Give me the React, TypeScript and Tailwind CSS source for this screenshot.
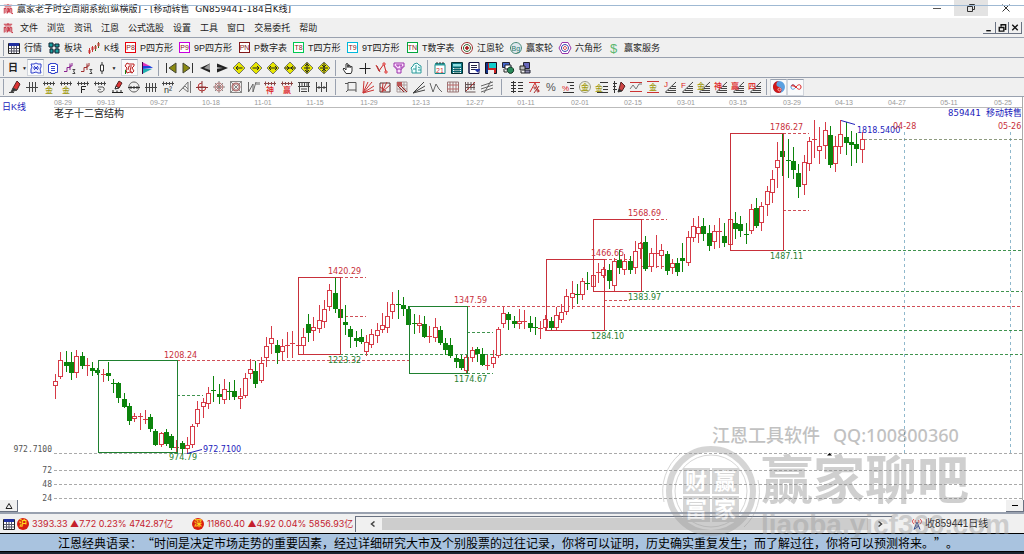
import React from 'react';

type Stroke = [d: string, stroke?: string, fill?: string];
type Glyph = [text: string, x: number, y: number, color: string, size: number];
type IconDef = { name: string; p?: Stroke[]; t?: Glyph[]; on?: boolean };

const K = '#444';
const R = '#d22';
const G = '#108010';
const Y = '#e6e600';
const OLIVE = '#a09a10';

const COMB = 'M0 2.5H12M1.5 .5V4.5M4.5 1V4M7.5 1V4M10.5 .5V4.5';
const DIAMOND = 'M6 0L12 6L6 12L0 6Z';
const STEPS = 'M5 2.5H12M6 5.5H12M4 8.5H12M1 11.5H12';
const SLOPE = 'M1 11.5L12 1M2 11.5H12M4 9.5H12M6 7.5H12M8 5.5H12';

const Icon: React.FC<{ def: IconDef; className?: string }> = ({ def, className = 'w-3 h-3' }) => (
  <svg viewBox="0 0 12 12" className={`${className} shrink-0 overflow-visible`} aria-hidden="true">
    {def.p?.map(([d, stroke = K, fill = 'none'], i) => (
      <path key={i} d={d} stroke={stroke} fill={fill} strokeWidth="1" />
    ))}
    {def.t?.map(([text, x, y, color, size], i) => (
      <text key={i} x={x} y={y} fill={color} fontSize={size} fontWeight="500">{text}</text>
    ))}
  </svg>
);

const sheet: IconDef = {
  name: '行情',
  p: [
    ['M.5 1.5H11.5V11.5H.5Z', '#222', '#fff'],
    ['M1 1H11V4H1Z', 'none', '#2030a0'],
    ['M1 6.5H11M1 9H11M3.5 4V11M6 4V11M8.5 4V11', '#556'],
  ],
};

const logo: IconDef = {
  name: '赢家',
  p: [
    ['M1 1.5H11M6 0V2M2 3.5H10M1.5 5V11.5M3.5 5V11M1.5 5.5H3.5M5 5.5H7.5V9.5H5ZM6.5 6V9M5 11.5L6 9M8.5 11V5.5H10.5V11.5H12', '#c11525'],
  ],
};

const viewIcons: IconDef[] = [
  { name: '周期图', on: true, p: [['M1 2H4L6 1L8 2H11V5L10 7L11 11H8L6 10L3 11H1V7L2 5Z', '#3344cc', '#eef'], ['M4 4L8 8M8 4L4 8M3 6H9', '#3344cc']] },
  { name: '资料', p: [['M3 1.5H9V2.5H10.5V10.5H8V11.5H4V10.5H1.5V2.5H3Z', '#3344cc', '#fff'], ['M4 4.5H8M4 6.5H8M4 8.5H8', '#3344cc']] },
  { name: '分段一', p: [['M0 9.5H3V5.5H6V1.5M6 8V4H8V1', '#8a2090'], ['M8.5 7.5H11L9.5 9L11 11.5H8.5', K]] },
  { name: '分段二', p: [['M0 9.5H3V5.5H6V1.5M6 8V4H8V1', '#a03030'], ['M8.5 7.5H11L9.5 9L11 11.5H8.5', K]] },
];

const formIcons: IconDef[] = [
  { name: '形态', on: true, p: [['M3 1L5 2H10V4L8 6L10 9L8 11L6 10L3 11L2 8L3 6L1 4Z', '#b22', '#fee'], ['M5 4H8M5 4L4 8M7 5L6 9L9 11', '#b22'], ['M1.5 8V12', G]] },
  { name: '旗形', p: [['M1 0L9 4H1Z', 'none', '#e030c0'], ['M1 4H9L12 6L1 7Z', 'none', '#2244dd'], ['M1 7H11L1 12Z', 'none', '#20b0b0'], ['M1.5 0V12', '#404']] },
];

const moveIcons: IconDef[] = [
  { name: '首页', p: [['M1.5 1V11', '#333'], ['M11 1V11L4 6Z', '#443', '#8a8a10']] },
  { name: '末页', p: [['M10.5 1V11', '#333'], ['M1 1V11L8 6Z', '#443', '#8a8a10']] },
  { name: '左移', p: [['M11 1.5V10.5L1 6Z', 'none', '#222'], ['M11 1.5V8L5 6Z', 'none', '#999']] },
  { name: '右移', p: [['M1 1.5V10.5L12 6Z', 'none', '#222'], ['M1 1.5V5L7 6L1 7Z', 'none', '#aaa']] },
  { name: '向左', p: [[DIAMOND, '#776', Y], ['M3 6H9.5M5 4L3 6L5 8', '#222']] },
  { name: '向右', p: [[DIAMOND, '#776', Y], ['M2.5 6H9M7 4L9 6L7 8', '#222']] },
  { name: '横向拉伸', p: [[DIAMOND, '#776', Y], ['M2 6H10M4 4L2 6L4 8M8 4L10 6L8 8', '#222']] },
  { name: '横向压缩', p: [[DIAMOND, '#776', Y], ['M1 6H11M3 4L5 6L3 8M9 4L7 6L9 8', '#222']] },
  { name: '纵向拉伸', p: [[DIAMOND, '#776', Y], ['M6 1V11M3 6H9M4 4L6 2L8 4M4 8L6 10L8 8', '#222']] },
  { name: '纵向压缩', p: [[DIAMOND, '#776', Y], ['M6 1V11M2 6H10M4 3L6 5L8 3M4 9L6 7L8 9', '#222']] },
];

const pointerIcons: IconDef[] = [
  { name: '手形', p: [['M4 11.5L1 7L2 6L4 8V2L5 1.5L6 2V5V3L8 3.5V5L10 4.5V9L9 11.5Z', '#333', '#fff'], ['M6 3V6M8 4V6', '#333']] },
  { name: '十字', p: [['M0.5 6.5H11.5M6.5 1V12', '#222']] },
  { name: '波段', p: [['M0 3L3 9L5 6L8 2L10 10', '#c22'], ['M1 4L4 10', '#a33'], ['M7 1H9V3H7ZM9 9H11V11H9Z', '#d44', '#fcc']] },
  { name: '宫位', p: [['M1 1H11V5H9V7H3V5H1ZM4 7V11H8V7M3 3H9M5 3V5M8 3V6', '#93a', '#fdf']] },
  { name: '云图', p: [['M2 11V8L1 6L3 4L4 2L7 1L9 3L11 4V11ZM3 7H6M6 3V11M8 5L10 6M8 8H11', '#2a9a9a', '#eff']] },
];

const toolIcons: IconDef[] = [
  { name: '日历', p: [['M1 2.5H11V11.5H1Z', '#188', '#fff'], ['M1 1H11V3.5H1Z', 'none', '#2a9a9a'], ['M3 0V2M6 0V2M9 0V2', '#333']], t: [['21', 2, 10.5, '#c33', 7]] },
  { name: '计算器', p: [['M.5 .5H11.5V11.5H.5Z', '#033', '#0a7080'], ['M2 2H10V4.5H2Z', 'none', '#8fe0e0'], ['M2 6.5H10M2 8.5H10M2 10.5H10', '#fff'], ['M4 5V11M6 5V11M8 5V11', '#055']] },
  { name: '列表', p: [['M1 .5H11V11.5H1Z', '#114', '#fff'], ['M1 1V11', '#114'], ['M3 3.5H9M3 5.5H9M3 7.5H7', '#224'], ['M7 7H12V8L9.5 10.5L7 8Z', 'none', '#2233aa']] },
  { name: '保存', p: [['M.5 .5H11.5V11.5H.5Z', '#112', '#c22'], ['M4 1H11V6H4Z', 'none', '#1cc'], ['M3 8H9V12H3Z', 'none', '#eee'], ['M1 1H3V11H1Z', 'none', '#113388']] },
  { name: '联网', p: [['M.5 .5H7.5V5.5H.5Z', '#223', '#46c'], ['M3 3H9V7H3Z', '#223', '#fff'], ['M8.5 5A3.2 3.2 0 1 1 8.4 5Z', '#132', '#2a8a5a'], ['M2 7V10H5', '#222']] },
  { name: '远程', p: [['M4.5 .5H10.5V6.5H4.5Z', '#223', '#66b'], ['M1 4H6V8H1Z', '#222', '#bbb'], ['M6 8H11V11H6Z', '#223', '#88a'], ['M2 9V11H6', '#222']] },
];

const drawIcons: IconDef[] = [
  { name: '画笔', p: [['M4 7L8 0L11 3L8 9L4 9Z', '#522', '#d33'], ['M4 7L2 11L8 9Z', K, '#333'], ['M0 11.5H5', K]] },
  { name: '等分线', p: [['M0 6.5H12M3.5 1V11M6.5 1V11M9.5 1V11']] },
  { name: '黄金周期', p: [[COMB]], t: [['金', 2, 12, OLIVE, 8]] },
  { name: '黄金时间', p: [[COMB]], t: [['金', 2, 12, OLIVE, 8]] },
  { name: '斐波那契', p: [[COMB], ['M4.5 12V5.5H9M4.5 8.5H8', '#222']] },
  { name: '螺旋', p: [[COMB], ['M4 6H9C12 8 9 12 5 11C2 9 6 7 7 9', '#555']] },
  { name: '标记', p: [['M5 5L8 0L11 2L8 7Z', '#522', '#d33'], ['M5 5L4 8L8 7M1 11.5H12M2 9V12M6 9.5V12M10 9V12', '#222']] },
  { name: '圆周', p: [['M6 1A5 5 0 1 1 5.9 1Z', '#555'], ['M0 6.5H12M3 5V8M6 5V8M9 5V8', '#333']] },
  { name: '刻度', p: [['M0 6.5H12M1.5 2V11M4.5 2V11M7.5 2V11M10.5 2V11']] },
  { name: '平方', p: [[COMB]], t: [['n²', 2, 12, '#333', 9]] },
  { name: '角度扇', p: [['M0 11L9 1V11L4 7M0 11L6 5L9 8M11.5 0V12', '#777']] },
  { name: '圆十字', p: [['M6 2A4 4 0 1 0 10 6H2', '#b33'], ['M6 0V12M0 6.5H12', '#833']] },
  { name: '放射', p: [['M6 0V12M0 6H12M2 2L10 10M10 2L2 10', '#888'], ['M6 2A4 4 0 1 1 5.9 2ZM6 4A2 2 0 1 1 5.9 4Z', '#b77']] },
  { name: '方圆', p: [['M.5 .5H11.5V11.5H.5ZM0 0L12 12M12 0L0 12', '#888'], ['M3 3H9V9H3ZM6 2A4 4 0 1 1 5.9 2Z', '#a66']] },
  { name: '波动', p: [['M1.5 1V11L6 3V11L9 1M10 1V4M12 1V4', '#666']] },
  { name: '神周期', p: [[COMB, '#844']], t: [['神', 2, 12, R, 8]] },
  { name: '赢周期', p: [[COMB, '#844']], t: [['赢', 2, 12, R, 8]] },
  { name: '栅栏', p: [['M0 1.5H12M0 5.5H12M1.5 1V11M10.5 1V11M4 1V5M6.5 1V5M9 1V5M3 8H9M3 10.5H9']] },
  { name: '间距', p: [['M1.5 1V11M6.5 1V11M11.5 1V11M2 6.5H11M4 5V8M9 5V8']] },
];

const gannIcons: IconDef[] = [
  { name: '方框', p: [['M3 1.5H11V9H3ZM0 2.5H3M3 9L1 11M11 9V11', '#555']] },
  { name: '红扇', p: [['M1 12L2 0M1 12L6 1M1 12L10 1M1 12L12 5M1 12L12 9', '#c33']] },
  { name: '方扇', p: [['M1 2H11V11H1Z', '#533'], ['M3 11L4 2M3 11L8 1M3 11L11 4M1 6L7 10', '#b33']] },
  { name: '方格斜', p: [['M1 1H11V11H1ZM1 4H11M1 8H11M4 1V11M8 1V11', '#a99'], ['M1 1L11 11M1 4L8 11', '#922'], ['M1 1H6V5H1Z', 'none', '#b55']] },
  { name: '射线', p: [['M0 12L11 1M0 12L12 5M0 12L12 9', '#444']] },
  { name: '折线', p: [['M0 2L3 11L6 3L9 8L12 11', '#666']] },
  { name: '网格', p: [['M.5 1H11.5V11H.5ZM3 1V11M6 1V11M9 1V11', '#977'], ['M0 4H12M0 8H12', '#b66']] },
  { name: '箭头网', p: [['M1.5 1V11H11.5M4 1V9M7 1V9M10 1V9M1 3.5H11M1 6.5H11', '#655'], ['M2 10L11 1', '#a33']] },
  { name: '平行线', p: [['M0 5L12 1M0 8L12 4M0 11L12 7M3 12L10 0', '#666']] },
];

const levelIcons: IconDef[] = [
  { name: '价格尺', p: [['M2.5 0V12M0 1.5H5M0 4.5H5M0 7.5H5M0 10.5H5M7 1.5H12M7 4.5H12M7 7.5H12M7 10.5H12', '#333']] },
  { name: '百分比趋势', p: [['M1 1.5H12M2 11L7 2L11 11', '#c33'], ['M7 6A1 1 0 1 1 6.9 6ZM10 9A1 1 0 1 1 9.9 9ZM11 5L6 12', '#a33']] },
  { name: '百分比', t: [['%', 1, 10, '#555', 11]] },
  { name: '百分比线', p: [['M5 1.5H12M8 4.5H12M8 7.5H12M1 11.5H12', '#333']], t: [['%', 0, 10, R, 8]] },
  { name: '黄金圆', p: [['M6 .5A5.5 5.5 0 1 1 5.9 .5Z', '#998', '#eed']], t: [['金', 2, 9, OLIVE, 8]] },
  { name: '黄金线', p: [['M4 1.5H12M7 5.5H12M7 8.5H12M1 11.5H12', '#333']], t: [['金', -1, 10, OLIVE, 8]] },
  { name: '价格标记', p: [['M1.5 0V12M0 2.5H4M0 5.5H3M0 8.5H4', '#333'], ['M6 8L8 1L12 5L9 10Z', '#522', '#c44'], ['M6 8L5 11L9 10', '#333', '#333']] },
  { name: '通道', p: [['M0 1.5H12M0 10.5H12', '#c33'], ['M0 8L3 4L6 8L9 3L12 3', '#777']] },
  { name: '黄金通道', p: [['M0 .5H12M0 11.5H12', '#c33']], t: [['金', 2, 9, OLIVE, 8]] },
  { name: '江恩角度', p: [[SLOPE]], t: [['J', 0, 6, R, 8]] },
  { name: '斐氏角度', p: [[SLOPE]], t: [['F', 0, 7, R, 8]] },
  { name: '金角度', p: [[SLOPE]], t: [['金', -1, 8, OLIVE, 8]] },
  { name: '神角度', p: [[SLOPE]], t: [['神', -1, 8, R, 8]] },
  { name: '赢角度', p: [[SLOPE]], t: [['赢', -1, 8, R, 8]] },
  { name: '四角度', p: [[SLOPE]], t: [['四', -1, 8, R, 8]] },
];

const yinYang: IconDef[] = [
  { name: '太极', on: true, p: [['M6 0A6 6 0 1 1 5.9 0Z', 'none', '#5aa0e0'], ['M7 0A6 6 0 1 0 5 12A3 3 0 0 0 6 6A3 3 0 0 1 7 0Z', 'none', '#d01818'], ['M6.5 7A1.5 1.5 0 1 1 6.4 7Z', '#fbb', R]] },
  { name: '无穷', on: true, p: [['M6 6C4 3 1 3 1 6C1 9 4 9 6 6', '#4a9ae0'], ['M1.5 4.5C3.5 3 5 5 6 6C8 9 11 9 11 6C11 3 8 3 6 6M1.5 5C3.5 4 5 6 6 7', '#d22']] },
];

const ToolButton: React.FC<{ def: IconDef }> = ({ def }) => (
  <button
    aria-label={def.name}
    className={`flex h-[17px] w-[17px] shrink-0 items-center justify-center ${def.on ? 'border border-gray-300 border-t-gray-400 bg-gray-50' : ''}`}
  >
    <Icon def={def} />
  </button>
);

const Group: React.FC<{ icons: IconDef[] }> = ({ icons }) => (
  <div className="flex shrink-0">
    {icons.map((def) => <ToolButton key={def.name} def={def} />)}
  </div>
);

const Sep: React.FC<{ className?: string }> = ({ className = 'mx-[3px]' }) => (
  <div className={`h-4 w-px shrink-0 bg-gray-400 ${className}`}></div>
);

const Boxed: React.FC<{ text: string; tone: string }> = ({ text, tone }) => (
  <span className={`flex h-[11px] w-[11px] items-center justify-center border bg-white text-[7px] leading-none text-[#822] ${tone}`}>{text}</span>
);

const blocks: IconDef = { name: '板块', p: [['M1 1H5V5H1ZM7 2H11V5H7ZM2 7H5V11H2ZM7 7H11V11H7Z', '#123', '#1aa0a0'], ['M5 3H7M5 9H7M3 5V7M9 5V7', '#123']] };
const candlesIcon: IconDef = { name: 'K线', p: [['M1.5 6V12M4.5 4V10', '#c33'], ['M1 8H2V11H1ZM4 5H5V8H4Z', '#c33'], ['M7.5 3V9M10.5 0V6', G], ['M7 4H8V7H7ZM10 1H11V4H10Z', '#c33', '#3a3']] };
const rings = (a: string, b: string, c: string): IconDef => ({
  name: '轮',
  p: [['M6 .5A5.5 5.5 0 1 1 5.9 .5Z', a, '#fff'], ['M6 2.5A3.5 3.5 0 1 1 5.9 2.5Z', b], ['M6 4.5A1.5 1.5 0 1 1 5.9 4.5Z', c, c]],
});
const hexagon: IconDef = { name: '六角形', p: [['M3 .5H9L12 6L9 11.5H3L0 6Z', '#93a', '#fff'], ['M6 2.5A3.5 3.5 0 1 1 5.9 2.5Z', '#34a'], ['M6 4.5A1.5 1.5 0 1 1 5.9 4.5Z', '#c33']] };
const bgWheel: IconDef = { name: '赢家轮', p: [['M6 .5A5.5 5.5 0 1 1 5.9 .5Z', '#487', '#dfe8ee']], t: [['Bg', 1.5, 8.5, '#2a7a6a', 7]] };
const dollar: IconDef = { name: '赢家服务', t: [['$', 2, 11, '#5cb870', 13]] };

const MAIN_TOOLS: { icon: React.ReactNode; label: string; width: string }[] = [
  { icon: <Icon def={sheet} />, label: '行情', width: 'w-10' },
  { icon: <Icon def={blocks} />, label: '板块', width: 'w-10' },
  { icon: <Icon def={candlesIcon} />, label: 'K线', width: 'w-[37px]' },
  { icon: <Boxed text="P8" tone="border-red-600" />, label: 'P四方形', width: 'w-[54px]' },
  { icon: <Boxed text="P9" tone="border-fuchsia-600" />, label: '9P四方形', width: 'w-[60px]' },
  { icon: <Boxed text="PN" tone="border-red-900" />, label: 'P数字表', width: 'w-[54px]' },
  { icon: <Boxed text="T8" tone="border-green-500" />, label: 'T四方形', width: 'w-[54px]' },
  { icon: <Boxed text="T9" tone="border-cyan-500" />, label: '9T四方形', width: 'w-[60px]' },
  { icon: <Boxed text="TN" tone="border-green-600" />, label: 'T数字表', width: 'w-[54px]' },
  { icon: <Icon def={rings('#922', '#363', '#a22')} />, label: '江恩轮', width: 'w-[49px]' },
  { icon: <Icon def={bgWheel} />, label: '赢家轮', width: 'w-[49px]' },
  { icon: <Icon def={hexagon} />, label: '六角形', width: 'w-[49px]' },
  { icon: <Icon def={dollar} />, label: '赢家服务', width: 'w-14' },
];

const MENUS = ['文件', '浏览', '资讯', '江恩', '公式选股', '设置', '工具', '窗口', '交易委托', '帮助'];

// direction, high, body top, body bottom, low
type Candle = [dir: 'r' | 'g', high: number, top: number, bottom: number, low: number];
const CANDLES: Candle[] = [
  ['r', 374, 381, 385, 398], ['r', 352, 360, 376, 378], ['g', 351, 362, 365, 371], ['g', 352, 362, 372, 379],
  ['r', 350, 356, 372, 377], ['g', 352, 356, 365, 368], ['r', 358, 365, 365, 375], ['g', 362, 368, 370, 375],
  ['g', 368, 370, 372, 374], ['r', 369, 374, 374, 381], ['g', 362, 373, 375, 380], ['g', 379, 383, 384, 392],
  ['g', 382, 383, 397, 402], ['g', 393, 399, 406, 407], ['g', 403, 406, 420, 424], ['r', 413, 416, 418, 421],
  ['r', 413, 416, 416, 429], ['r', 410, 419, 419, 423], ['g', 414, 417, 428, 431], ['g', 429, 431, 444, 445],
  ['r', 432, 433, 444, 446], ['g', 429, 432, 443, 445], ['g', 434, 436, 447, 449], ['r', 440, 447, 448, 451],
  ['g', 441, 443, 448, 453], ['r', 437, 445, 448, 453], ['r', 424, 426, 444, 447], ['r', 401, 409, 423, 426],
  ['r', 398, 402, 406, 417], ['r', 387, 393, 403, 408], ['g', 376, 390, 391, 401], ['g', 384, 394, 396, 403],
  ['r', 379, 389, 399, 403], ['g', 382, 391, 391, 399], ['g', 380, 391, 396, 399], ['r', 388, 396, 398, 408],
  ['r', 373, 378, 395, 397], ['r', 359, 369, 373, 378], ['g', 361, 371, 383, 387], ['r', 357, 363, 380, 382],
  ['r', 337, 346, 357, 366], ['r', 326, 338, 343, 353], ['g', 340, 345, 352, 363], ['r', 339, 346, 351, 360],
  ['r', 332, 345, 345, 357], ['r', 331, 343, 343, 357], ['r', 343, 345, 345, 348], ['r', 328, 337, 345, 354],
  ['g', 314, 324, 332, 341], ['r', 317, 327, 330, 340], ['r', 305, 320, 328, 332], ['r', 300, 309, 321, 327],
  ['r', 284, 290, 306, 310], ['g', 278, 293, 308, 312], ['g', 308, 309, 317, 318], ['g', 305, 322, 324, 334],
  ['g', 326, 329, 336, 347], ['g', 331, 338, 340, 346], ['g', 329, 337, 341, 343], ['r', 335, 342, 351, 355],
  ['r', 329, 334, 344, 347], ['r', 323, 330, 335, 342], ['r', 313, 325, 329, 332], ['r', 302, 316, 327, 332],
  ['r', 292, 304, 311, 318], ['g', 290, 304, 305, 318], ['g', 297, 305, 308, 315], ['g', 306, 309, 324, 324],
  ['g', 314, 323, 324, 333], ['r', 315, 323, 325, 332], ['g', 316, 324, 336, 337], ['r', 326, 336, 337, 342],
  ['r', 318, 327, 337, 341], ['g', 326, 330, 342, 344], ['g', 338, 343, 349, 354], ['g', 338, 345, 355, 357],
  ['g', 355, 358, 361, 367], ['g', 355, 359, 367, 369], ['r', 355, 357, 370, 372], ['r', 347, 350, 357, 361],
  ['g', 347, 349, 353, 361], ['g', 348, 354, 364, 365], ['r', 355, 365, 365, 369], ['r', 350, 357, 363, 367],
  ['r', 327, 329, 355, 357], ['r', 307, 313, 323, 327], ['g', 312, 314, 319, 329], ['g', 316, 321, 323, 327],
  ['r', 309, 321, 323, 328], ['r', 310, 321, 322, 328], ['g', 316, 323, 327, 331], ['g', 317, 327, 328, 334],
  ['r', 321, 328, 328, 338], ['r', 315, 319, 327, 330], ['g', 317, 321, 327, 329], ['r', 307, 315, 327, 330],
  ['r', 304, 312, 319, 322], ['r', 289, 296, 311, 314], ['r', 281, 293, 297, 308], ['g', 284, 294, 294, 303],
  ['r', 278, 281, 294, 299], ['g', 272, 283, 284, 289], ['r', 268, 275, 286, 290], ['r', 263, 272, 272, 282],
  ['r', 267, 269, 275, 277], ['g', 264, 270, 280, 288], ['r', 258, 261, 285, 291], ['g', 250, 260, 267, 273],
  ['r', 254, 261, 269, 274], ['g', 256, 261, 269, 273], ['r', 241, 251, 267, 273], ['r', 242, 243, 248, 258],
  ['g', 236, 242, 268, 270], ['r', 248, 253, 266, 271], ['r', 235, 253, 253, 267], ['r', 244, 250, 255, 268],
  ['g', 251, 254, 270, 274], ['r', 259, 263, 267, 273], ['g', 258, 263, 271, 275], ['g', 243, 258, 260, 271],
  ['r', 231, 237, 262, 265], ['r', 218, 226, 237, 241], ['r', 216, 227, 233, 242], ['g', 218, 226, 233, 240],
  ['g', 225, 233, 245, 250], ['r', 225, 231, 241, 248], ['r', 218, 231, 232, 247], ['g', 223, 236, 242, 246],
  ['r', 215, 219, 244, 248], ['g', 212, 223, 228, 238], ['g', 216, 224, 230, 236], ['g', 223, 234, 235, 243],
  ['r', 204, 209, 230, 233], ['g', 198, 208, 225, 227], ['r', 202, 206, 222, 230], ['r', 186, 191, 204, 215],
  ['r', 170, 179, 192, 202], ['r', 142, 160, 167, 187], ['g', 134, 151, 156, 175], ['g', 139, 160, 161, 177],
  ['g', 147, 161, 169, 178], ['g', 164, 173, 186, 197], ['r', 155, 162, 184, 194], ['r', 137, 141, 163, 170],
  ['r', 120, 139, 140, 157], ['r', 127, 146, 150, 163], ['r', 122, 130, 145, 158], ['g', 126, 135, 164, 167],
  ['r', 136, 146, 163, 171], ['r', 120, 134, 146, 153], ['g', 122, 137, 142, 154], ['g', 131, 142, 144, 165],
  ['g', 133, 144, 148, 162], ['r', 132, 139, 149, 162],
];

const UP = '#d63a46';
const DOWN = '#0c840c';
const BOX_RED = '#c8303a';
const BOX_GREEN = '#1f8030';

const BOXES: [x: number, y: number, w: number, h: number, color: string][] = [
  [98, 360, 79, 92, BOX_GREEN],
  [298, 277, 42, 77, BOX_RED],
  [409, 306, 58, 67, BOX_GREEN],
  [546, 259, 58, 71, BOX_RED],
  [593, 219, 48, 72, BOX_RED],
  [730, 133, 53, 117, BOX_RED],
];

const LEVELS: [x1: number, x2: number, y: number, color: string][] = [
  [177, 409, 360, BOX_RED], [177, 203, 395, BOX_GREEN],
  [340, 366, 277, BOX_RED], [340, 366, 316, BOX_RED], [340, 1022, 354, BOX_GREEN],
  [467, 1022, 306, BOX_RED], [467, 493, 332, BOX_GREEN], [467, 493, 373, BOX_GREEN],
  [604, 630, 259, BOX_RED], [604, 630, 300, BOX_RED], [604, 1022, 330, BOX_GREEN],
  [641, 667, 219, BOX_RED], [641, 667, 266, BOX_RED], [641, 1022, 291, BOX_GREEN],
  [783, 809, 133, BOX_RED], [783, 809, 210, BOX_RED], [783, 1022, 250, BOX_GREEN],
  [864, 1022, 139, '#7a8a6a'],
];

const PRICES: [text: string, x: number, y: number, color: string][] = [
  ['1208.24', 164, 358, BOX_RED], ['974.79', 169, 460, BOX_GREEN], ['972.7100', 203, 452, '#2222bb'],
  ['1420.29', 328, 274, BOX_RED], ['1223.32', 328, 363, BOX_GREEN],
  ['1347.59', 454, 303, BOX_RED], ['1174.67', 454, 382, BOX_GREEN],
  ['1466.65', 591, 256, BOX_RED], ['1284.10', 591, 339, BOX_GREEN],
  ['1568.69', 628, 216, BOX_RED], ['1383.97', 628, 300, BOX_GREEN],
  ['1786.27', 770, 130, BOX_RED], ['1487.11', 770, 259, BOX_GREEN],
  ['1818.5400', 857, 133, '#2222bb'], ['04-28', 893, 129, BOX_RED], ['05-26', 998, 129, BOX_RED],
];

const DATES = [
  '08-29', '09-13', '09-27', '10-18', '11-01', '11-15', '11-29', '12-13', '12-27', '01-11',
  '02-01', '02-15', '03-01', '03-15', '03-29', '04-13', '04-27', '05-11', '05-25',
];
const DATE_X = [63, 106, 159, 211, 263, 315, 369, 421, 475, 526, 580, 633, 686, 738, 792, 844, 897, 949, 1003];

const Chart: React.FC = () => (
  <svg viewBox="0 97 1024 415" className="block w-full bg-white" role="img" aria-label="日K线">
    <g className="font-['Liberation_Sans',sans-serif] text-[7px]" fill="#999" textAnchor="middle">
      {DATES.map((d, i) => <text key={d} x={DATE_X[i]} y={105}>{d}</text>)}
    </g>
    <path d="M54 107.5H1022" stroke="#bbb" />
    <text x="2" y="110" fill="#2222bb" className="text-[9px]">日K线</text>
    <text x="54" y="117" fill="#222" className="text-[10px]">老子十二宫结构</text>
    <text x="1022" y="116" textAnchor="end" fill="#2222bb" className="font-['DejaVu_Sans_Mono','Noto_Sans_CJK_SC',monospace] text-[9px]">859441 移动转售</text>

    <g stroke="#aaa" strokeDasharray="3 2">
      {[453, 470, 484, 498].map((y) => <path key={y} d={`M54 ${y + 0.5}H1022`} />)}
    </g>
    <path d="M904.5 132V453M1010.5 132V453" stroke="#8fb8cc" strokeDasharray="3 3" />
    {LEVELS.map(([x1, x2, y, color]) => (
      <path key={`${x1}-${y}`} d={`M${x1} ${y + 0.5}H${x2}`} stroke={color} strokeDasharray="3 2" strokeOpacity="0.85" />
    ))}

    {CANDLES.map(([dir, high, top, bottom, low], i) => {
      const x = Math.round(55.2 + i * 5.27);
      const color = dir === 'r' ? UP : DOWN;
      if (bottom - top < 2) {
        return <path key={i} d={`M${x + 0.5} ${high}V${low + 1}M${x - 2} ${top + 0.5}H${x + 3}`} stroke={color} />;
      }
      return (
        <g key={i} stroke={color}>
          <path d={`M${x + 0.5} ${high}V${top}M${x + 0.5} ${bottom}V${low + 1}`} />
          <rect x={x - 1.5} y={top + 0.5} width="4" height={bottom - top} fill={dir === 'r' ? '#fff' : color} />
        </g>
      );
    })}

    {BOXES.map(([x, y, w, h, color]) => (
      <rect key={x} x={x + 0.5} y={y + 0.5} width={w} height={h} fill="none" stroke={color} />
    ))}
    <g className="font-['DejaVu_Sans',sans-serif] text-[8px]">
      {PRICES.map(([text, x, y, color]) => <text key={text} x={x} y={y} fill={color}>{text}</text>)}
    </g>
    <path d="M187 453.5L202 449.5M841 120.5L855 124.5" stroke="#2222bb" />
    <path d="M827 455.5L829.5 453L832 455.5Z" fill="#000" />
    <g className="font-['DejaVu_Sans_Mono',monospace] text-[8px]" fill="#555" textAnchor="end">
      <text x="52" y="452">972.7100</text>
      <text x="52" y="473">72</text>
      <text x="52" y="487">48</text>
      <text x="52" y="501">24</text>
    </g>
    <path d="M1022.5 97V512" stroke="#aaa" />
  </svg>
);

const Watermark: React.FC = () => (
  <svg viewBox="0 0 384 144" className="pointer-events-none absolute right-0 bottom-0 h-36 w-96" opacity="0.4">
    <g fill="none" stroke="#999">
      <circle cx="71" cy="81" r="42" strokeWidth="6" />
      <circle cx="71" cy="81" r="36" strokeWidth="1" />
      <path d="M24 92A48 48 0 0 1 40 44M118 70A48 48 0 0 1 104 117" strokeWidth="1" />
    </g>
    <g fill="#999">
      <rect x="43" y="58" width="27" height="26" />
      <rect x="72" y="58" width="27" height="26" />
      <rect x="43" y="86" width="27" height="26" />
      <rect x="72" y="86" width="27" height="26" />
    </g>
    <g fill="#fff" className="text-[22px] font-bold">
      <text x="45" y="79">财</text>
      <text x="74" y="79">赢</text>
      <text x="45" y="107">富</text>
      <text x="74" y="107">家</text>
    </g>
    <g fill="#666" className="font-['Noto_Sans','Noto_Sans_CJK_SC',sans-serif] text-[18px] font-medium">
      <text x="72" y="32">江恩工具软件</text>
      <text x="193" y="32">QQ:100800360</text>
    </g>
    <text x="121" y="89" fill="#888" className="text-[52px] font-bold">赢家聊吧</text>
    <text x="121" y="124" fill="#999" className="font-['Liberation_Sans',sans-serif] text-[28px] font-bold">liaoba.yicf360.com</text>
  </svg>
);

const Quote: React.FC<{ mark: string; text: string }> = ({ mark, text }) => (
  <div className="flex shrink-0 items-center gap-[3px]">
    <span className="flex h-3 w-3 items-center justify-center rounded-full bg-[#d81e10] text-[8px] leading-none font-bold text-yellow-300">{mark}</span>
    <span className="whitespace-nowrap font-['Inter','Noto_Sans_CJK_SC',sans-serif] text-[9px] text-[#c4202c]">{text}</span>
  </div>
);

const App: React.FC = () => (
  <div className="relative w-full overflow-hidden bg-[#f0f0f0] font-['Liberation_Sans','Noto_Sans_CJK_SC',sans-serif] text-[9px] leading-3 text-[#222]">
    <header className="relative flex h-[18px] items-center justify-between bg-white pl-[3px]">
      <div className="absolute inset-x-0 top-[5px] h-px bg-[#9fb9d3]"></div>
      <div className="flex items-center gap-1">
        <Icon def={logo} className="w-[10px] h-[10px]" />
        <h1 className="whitespace-pre font-['DejaVu_Sans','Noto_Sans_CJK_SC',sans-serif]">赢家老子时空周期系统[纵横版] - [移动转售  GN859441-184日K线]</h1>
      </div>
      <div className="flex h-full items-start">
        <button aria-label="最小化" className="flex h-4 w-[34px] items-center justify-center"><span className="h-px w-2 bg-[#555]"></span></button>
        <button aria-label="还原" className="flex h-4 w-[34px] items-center justify-center bg-[#dcdcdc]/80">
          <svg viewBox="0 0 8 8" className="h-2 w-2" fill="none" stroke="#333"><path d="M.5 2.5H5.5V7.5H.5ZM2.5 2V.5H7.5V5.5H6" /></svg>
        </button>
        <button aria-label="关闭" className="flex h-4 w-9 items-center justify-center">
          <svg viewBox="0 0 8 8" className="h-2 w-2" stroke="#333"><path d="M.5 .5L7.5 7.5M7.5 .5L.5 7.5" /></svg>
        </button>
      </div>
    </header>

    <nav className="flex h-5 items-center justify-between border-b border-gray-400 pr-[2px] pl-[3px]">
      <div className="flex items-center gap-[7px]">
        <Icon def={logo} className="w-[10px] h-[10px]" />
        <div className="flex gap-[9px]">
          {MENUS.map((m) => <button key={m}>{m}</button>)}
        </div>
      </div>
      <div className="flex">
        {['M3 9.5H8', 'M3 6H8V10H3ZM5 5V3H10V8H9', 'M3 3L9 9M9 3L3 9'].map((d) => (
          <button key={d} aria-label="子窗口" className="h-3 w-[13px] border-r border-b border-gray-500 bg-[#f0f0f0]">
            <svg viewBox="0 0 12 12" className="h-[11px] w-3" fill="none" stroke="#111" strokeWidth="1.5"><path d={d} /></svg>
          </button>
        ))}
      </div>
    </nav>

    <div className="flex h-5 items-center border-b border-gray-400 pl-[3px]">
      <div className="mr-1 h-4 w-px bg-gray-400"></div>
      {MAIN_TOOLS.map((t) => (
        <button key={t.label} className={`flex shrink-0 items-center gap-1 whitespace-nowrap ${t.width}`}>
          {t.icon}
          <span>{t.label}</span>
        </button>
      ))}
    </div>

    <div className="flex h-5 items-center border-b border-gray-400 pl-[3px]">
      <div className="mr-1 h-4 w-px bg-gray-400"></div>
      <button className="flex w-[19px] items-center gap-1 text-[10px] font-bold">日<span className="text-[5px]">▼</span></button>
      <Group icons={viewIcons} />
      <button aria-label="蜡烛样式" className="flex w-[26px] items-center justify-center gap-2">
        <svg viewBox="0 0 4 12" className="h-3 w-1" fill="#fff" stroke="#333"><path d="M2 0V12" /><path d="M.5 3H3.5V9H.5Z" /></svg>
        <span className="text-[5px]">▼</span>
      </button>
      <Group icons={formIcons} />
      <Sep />
      <Group icons={moveIcons} />
      <Sep />
      <Group icons={pointerIcons} />
      <Sep />
      <Group icons={toolIcons} />
    </div>

    <div className="flex h-[19px] items-center border-b border-gray-400 pl-[3px]">
      <div className="mr-[2px] h-4 w-px bg-gray-400"></div>
      <Group icons={drawIcons} />
      <Sep className="mx-[6px]" />
      <Group icons={gannIcons} />
      <Sep className="mx-[6px]" />
      <Group icons={levelIcons} />
      <Sep className="mx-[3px]" />
      <Group icons={yinYang} />
    </div>

    <main className="relative">
      <Chart />
      <button aria-label="展开" className="absolute bottom-0 left-0 flex h-3 w-[18px] items-center justify-center border-r border-b border-gray-500 bg-[#f0f0f0]">
        <svg viewBox="0 0 8 6" className="h-[6px] w-2" fill="none" stroke="#222"><path d="M1 5.5H7L4 .5Z" /></svg>
      </button>
      <button aria-label="收起" className="absolute right-0 bottom-0 flex h-3 w-[18px] items-center justify-center border-r border-b border-gray-500 bg-[#f0f0f0]">
        <span className="h-px w-[6px] bg-black"></span>
      </button>
    </main>

    <footer>
      <div className="flex h-[22px] items-center border-t-2 border-b border-t-gray-400 border-b-black pl-[3px]">
        <Icon def={sheet} />
        <div className="ml-[2px] flex gap-[19px]">
          <Quote mark="沪" text="3393.33 ▲7.72 0.23% 4742.87亿" />
          <Quote mark="深" text="11860.40 ▲4.92 0.04% 5856.93亿" />
        </div>
        <div className="ml-[2px] flex h-4 min-w-0 flex-1 items-center border-t border-l border-gray-500">
          <button aria-label="向左滚动" className="flex h-full w-[26px] shrink-0 items-center justify-center pl-2">
            <svg viewBox="0 0 6 6" className="h-[6px] w-[6px]" fill="none" stroke="#444" strokeWidth="1.5"><path d="M4.5 .5L1.5 3L4.5 5.5" /></svg>
          </button>
          <div className="h-3 flex-1 bg-[#cdcdcd]"></div>
          <button aria-label="向右滚动" className="flex h-full w-6 shrink-0 items-center justify-center">
            <svg viewBox="0 0 6 6" className="h-[6px] w-[6px]" fill="none" stroke="#444" strokeWidth="1.5"><path d="M1.5 .5L4.5 3L1.5 5.5" /></svg>
          </button>
        </div>
        <div className="flex w-[132px] shrink-0 items-center gap-[3px] pl-5 text-[10px]">
          <svg viewBox="0 0 10 12" className="h-3 w-[10px]" fill="none">
            <path d="M5 4L2 11.5M5 4L8 11.5M3.5 8H6.5M2.5 11L7 8" stroke="#223a8a" />
            <path d="M2 1C0 3 0 4 2 6M8 1C10 3 10 4 8 6M3.5 2C3 3 3 4 3.5 5M6.5 2C7 3 7 4 6.5 5" stroke="#d33" />
          </svg>
          <span className="whitespace-nowrap">收859441日线</span>
        </div>
      </div>
      <p className="h-[18px] overflow-hidden border-b border-black bg-[#a9c3df] pl-[58px] font-['Noto_Sans_CJK_SC',sans-serif] text-[12px] leading-[18px] whitespace-nowrap text-black [text-spacing-trim:space-all]" lang="zh-CN">
        江恩经典语录：“时间是决定市场走势的重要因素，经过详细研究大市及个别股票的过往记录，你将可以证明，历史确实重复发生；而了解过往，你将可以预测将来。”。
      </p>
      <div className="h-[2px] bg-[#1a2430]"></div>
    </footer>
    <Watermark />
  </div>
);

export default App;
